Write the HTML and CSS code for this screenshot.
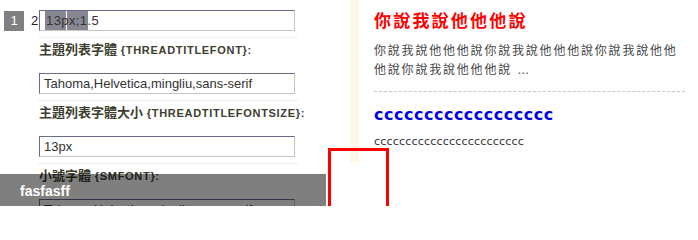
FILE: index.html
```html
<!DOCTYPE html>
<html lang="zh-Hant">
<head>
<meta charset="utf-8">
<title>設定</title>
<link rel="stylesheet" href="styles.css">
</head>
<body>
<div class="page">
  <div class="pager">
    <span class="pg cur">1</span>
    <span class="pg plain">2</span>
    <span class="pg shade"></span>
    <span class="pg shade"></span>
  </div>
  <div class="settings">
    <div class="field">
      <input class="text first" type="text" value="13px;1.5">
      <div class="sep"></div>
      <div class="label"><span class="zh">主題列表字體</span> {THREADTITLEFONT}:</div>
    </div>
    <div class="field">
      <input class="text" type="text" value="Tahoma,Helvetica,mingliu,sans-serif">
      <div class="sep"></div>
      <div class="label"><span class="zh">主題列表字體大小</span> {THREADTITLEFONTSIZE}:</div>
    </div>
    <div class="field">
      <input class="text" type="text" value="13px">
      <div class="sep"></div>
      <div class="label"><span class="zh">小號字體</span> {SMFONT}:</div>
    </div>
    <div class="field">
      <input class="text" type="text" value="Tahoma,Helvetica,mingliu,sans-serif">
    </div>
  </div>
  <div class="preview">
    <div class="preview-box">
      <h2 class="title">你說我說他他他說</h2>
      <p class="summary">你說我說他他他說你說我說他他他說你說我說他他他說你說我說他他他說 …</p>
      <div class="dash"></div>
      <div class="big">cccccccccccccccccc</div>
      <div class="small">cccccccccccccccccccccccc</div>
    </div>
  </div>
  <div class="caption">fasfasff</div>
  <div class="marker"></div>
</div>
</body>
</html>
```

FILE: styles.css
```css
html, body {
  margin: 0;
  padding: 0;
  background: #fff;
  overflow: hidden;
}

.page {
  position: relative;
  width: 698px;
  height: 206px;
  display: flex;
  overflow: hidden;
  font-family: "Liberation Sans", "Noto Sans CJK TC", sans-serif;
}

.settings {
  position: relative;
  z-index: 1;
  width: 350px;
  flex: none;
  padding: 10px 0 0 39px;
  box-sizing: border-box;
}

.field {
  display: flex;
  flex-direction: column;
}

.text {
  width: 256px;
  height: 21px;
  box-sizing: border-box;
  margin: 0;
  padding: 0 0 0 4px;
  border: 1px solid;
  border-color: #6b6a8c #c4c4c4 #c4c4c4 #6b6a8c;
  background: #fff;
  color: #333;
  font-family: "Liberation Sans", sans-serif;
  font-size: 13px;
  outline: none;
}

.text.first {
  padding-left: 6px;
  letter-spacing: 0.4px;
  background: transparent;
}

.sep {
  width: 258px;
  margin-top: 6px;
  border-bottom: 1px dotted #e2e8cf;
}

.label {
  margin: 4px 0 15px;
  height: 16px;
  line-height: 16px;
  font-size: 11px;
  font-weight: bold;
  color: #3d3d30;
  letter-spacing: 0.7px;
  white-space: nowrap;
}

.label .zh {
  font-size: 13px;
  letter-spacing: 0;
  vertical-align: top;
}

.preview {
  flex: 1;
}

.preview-box {
  border-left: 9px solid #fff8ea;
  padding: 10px 0 13px 15px;
  width: 311px;
}

.title {
  margin: 0;
  line-height: 24px;
  font-size: 17px;
  font-weight: bold;
  color: #f00;
  letter-spacing: 2.2px;
}

.summary {
  margin: 8px 0 0;
  line-height: 19px;
  font-size: 12px;
  color: #444;
  letter-spacing: 1.8px;
}

.dash {
  margin-top: 11px;
  border-top: 1px dashed #c8c8c8;
  width: 311px;
}

.big {
  margin-top: 13px;
  line-height: 20px;
  font-family: "DejaVu Sans", sans-serif;
  font-size: 16px;
  font-weight: bold;
  color: #0000e6;
  letter-spacing: 0.5px;
}

.small {
  margin-top: 9px;
  line-height: 16px;
  font-family: "DejaVu Sans", sans-serif;
  font-size: 11px;
  color: #333;
  letter-spacing: 0.2px;
}

.pager {
  position: absolute;
  z-index: 0;
  left: 4px;
  top: 10px;
  display: flex;
  align-items: flex-start;
}

.pg {
  display: block;
  height: 20px;
  line-height: 20px;
  font-size: 13px;
}

.pg.cur {
  width: 20px;
  margin-top: 1px;
  text-align: center;
  background: #808080;
  color: #fff;
}

.pg.plain {
  width: 21px;
  text-align: center;
  color: #222;
  margin-top: 1px;
}

.pg.shade {
  width: 21px;
  height: 21px;
  margin-right: 1px;
  background: #878793;
}

.caption {
  position: absolute;
  z-index: 2;
  left: 0;
  top: 174px;
  width: 326px;
  height: 32px;
  box-sizing: border-box;
  padding: 8px 0 0 20px;
  background: rgba(0, 0, 0, 0.5);
  color: #fff;
  font-size: 14px;
  font-weight: bold;
  line-height: 18px;
}

.marker {
  position: absolute;
  z-index: 3;
  left: 328px;
  top: 148px;
  width: 61px;
  height: 70px;
  box-sizing: border-box;
  border: 3px solid #f00;
}
```
